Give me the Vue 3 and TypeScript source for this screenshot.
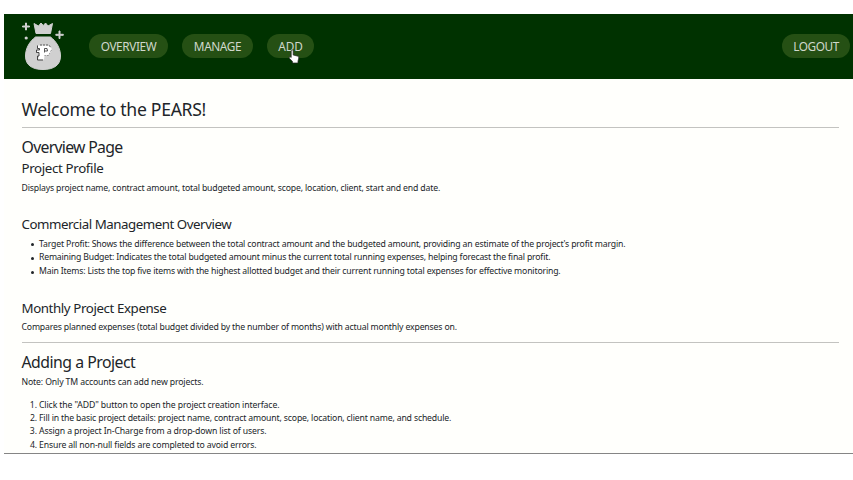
<script setup lang="ts">
const nav: { label: string; cls: string }[] = [
  { label: 'OVERVIEW', cls: 'overview' },
  { label: 'MANAGE', cls: 'manage' },
  { label: 'ADD', cls: 'add' },
]
const metrics: string[] = [
  "Target Profit: Shows the difference between the total contract amount and the budgeted amount, providing an estimate of the project's profit margin.",
  'Remaining Budget: Indicates the total budgeted amount minus the current total running expenses, helping forecast the final profit.',
  'Main Items: Lists the top five items with the highest allotted budget and their current running total expenses for effective monitoring.',
]
const steps: string[] = [
  'Click the "ADD" button to open the project creation interface.',
  'Fill in the basic project details: project name, contract amount, scope, location, client name, and schedule.',
  'Assign a project In-Charge from a drop-down list of users.',
  'Ensure all non-null fields are completed to avoid errors.',
]
</script>

<template>
  <div class="page">
    <header class="bar">
      <svg class="logo" viewBox="0 0 44 50" width="44" height="50">
        <g fill="#d0d0d0" stroke="#d0d0d0" stroke-linejoin="round">
          <path d="M13 2.500 L17.500 5 L20 2 L22.300 4.500 L24.600 2 L27 5 L31.500 2.500 L29.500 12.500 H15 Z" />
          <path d="M14.500 16 H29.500 C35 20 39.500 27 39.500 35 C39.500 44 33 48.500 22 48.500 S4.500 44 4.500 35 C4.500 27 9 20 14.500 16 Z" />
          <path d="M4.500 2 H5.500 V5 H8.500 V6 H5.500 V9 H4.500 V6 H1.500 V5 H4.500 Z" />
          <path d="M38 10 H39 V13.300 H42.300 V14.300 H39 V17.500 H38 V14.300 H34.800 V13.300 H38 Z" />
        </g>
        <circle cx="5.200" cy="17" r="1.600" fill="#d0d0d0" />
        <path d="M17 24.500 H27.500 L30.500 27 V30.500 L27.500 34.500 H23.500 L23 38.500 H17 L18 35 V32 H16 V29 H18 V27.500 H17 Z" fill="#fff" />
        <path d="M16.500 24.500 V27.500 H18.500 V29 H15.500 V31.500 H18 V35 H16.500 V39 H22" fill="none" stroke="#333" stroke-width=".9" />
        <path d="M19 24 H27 L30 26" fill="none" stroke="#333" stroke-width=".8" stroke-dasharray="2 1" />
        <path d="M23.500 31.500 V27.500 H26 L26.500 30 H24" fill="none" stroke="#444" stroke-width=".9" />
        <path d="M30.500 29 L27.500 34.500 H23.500" fill="none" stroke="#555" stroke-width=".6" stroke-dasharray="2 1" />
      </svg>
      <nav class="links">
        <a v-for="n in nav" :key="n.label" class="pill" :class="n.cls"><span>{{ n.label }}</span></a>
      </nav>
      <a class="pill logout"><span>LOGOUT</span></a>
      <svg class="cursor" viewBox="0 0 12 15" width="12" height="15">
        <path d="M3.200 1.500 Q4.300 .3 5.200 1.500 V6 L10 7.200 Q11 7.500 10.800 9 L10 12 V14 H4.500 V12.500 L1.300 9.200 Q.7 7.500 2.100 7.700 L3.200 8.500 Z" fill="#fff" stroke="#222" stroke-width=".7" />
      </svg>
    </header>
    <main class="content">
      <h1>Welcome to the PEARS!</h1>
      <hr />
      <h2 class="h-overview">Overview Page</h2>
      <h3 class="h-profile">Project Profile</h3>
      <p class="p-profile">Displays project name, contract amount, total budgeted amount, scope, location, client, start and end date.</p>
      <h3 class="h-commercial">Commercial Management Overview</h3>
      <ul>
        <li v-for="(m, i) in metrics" :key="i" :class="'m' + i">{{ m }}</li>
      </ul>
      <h3 class="h-monthly">Monthly Project Expense</h3>
      <p class="p-monthly">Compares planned expenses (total budget divided by the number of months) with actual monthly expenses on.</p>
      <hr />
      <h2 class="h-adding">Adding a Project</h2>
      <p class="p-note">Note: Only TM accounts can add new projects.</p>
      <ol>
        <li v-for="(s, i) in steps" :key="i" :class="'s' + i">{{ s }}</li>
      </ol>
    </main>
  </div>
</template>

<style>
body { background: #fff; overflow: hidden; }
</style>

<style scoped>
.page {
  box-sizing: border-box;
  margin: 14px 0 0 4px;
  height: 440px;
  border-bottom: 1px solid #858585;
  background: #fffffc;
  font-family: "Noto Sans", "Open Sans", sans-serif;
  color: #212529;
  white-space: nowrap;
}
.bar {
  position: relative;
  box-sizing: border-box;
  display: flex;
  align-items: center;
  height: 65px;
  padding: 0 3px 1px 17px;
  background: #003200;
}
.logo { flex: none; }
.links { display: flex; gap: 14px; margin-left: 24px; flex: 1; }
.pill {
  display: flex;
  align-items: center;
  justify-content: center;
  height: 24px;
  border-radius: 12px;
  background: #255014;
  color: #d0d8cc;
  font-size: 11.800px;
  letter-spacing: -0.4px;
}
.overview { width: 79px; }
.manage { width: 71px; }
.add { width: 47px; letter-spacing: -0.1px; }
.logout { width: 68px; }
.cursor { position: absolute; left: 284px; top: 35px; }
.content { padding: 17.500px 14px 0 17.500px; }
h1, h2, h3, p, ul, ol { margin: 0; font-weight: 400; }
h1 { font-size: 17.600px; line-height: 24px; letter-spacing: -0.3px; margin-bottom: 6.500px; }
h2 { font-size: 15.800px; line-height: 20px; }
h3 { font-size: 13.300px; line-height: 18px; letter-spacing: -0.42px; }
p, li { font-size: 8.700px; line-height: 13.500px; letter-spacing: -0.166px; }
hr { height: 1px; margin: 0; border: 0; background: #c3c3c0; }
.h-overview { margin-top: 9px; letter-spacing: -0.7px; }
.h-profile { margin-top: 2px; letter-spacing: -0.35px; }
.p-profile { margin-top: 5px; }
.h-commercial { margin-top: 19px; letter-spacing: -0.46px; }
ul { margin-top: 5px; padding-left: 17.500px; list-style: none; }
ul li { display: flex; align-items: center; line-height: 13.700px; }
ul li::before {
  content: "";
  width: 3px;
  height: 3px;
  margin: 1px 5px 0 -8px;
  border-radius: 50%;
  background: #212529;
}
.m0 { letter-spacing: -0.158px; }
.m1 { letter-spacing: -0.184px; }
.m2 { letter-spacing: -0.17px; }
.h-monthly { margin-top: 19.900px; letter-spacing: -0.4px; }
.p-monthly { margin-top: 4px; margin-bottom: 8px; }
.h-adding { margin-top: 9px; letter-spacing: -0.5px; }
.p-note { margin-top: 4px; letter-spacing: -0.135px; }
ol { margin-top: 9px; padding-left: 17.500px; }
ol li { line-height: 13.350px; }
.s0 { letter-spacing: -0.12px; }
.s1 { letter-spacing: -0.16px; }
.s2 { letter-spacing: -0.13px; }
.s3 { letter-spacing: -0.145px; }
</style>
